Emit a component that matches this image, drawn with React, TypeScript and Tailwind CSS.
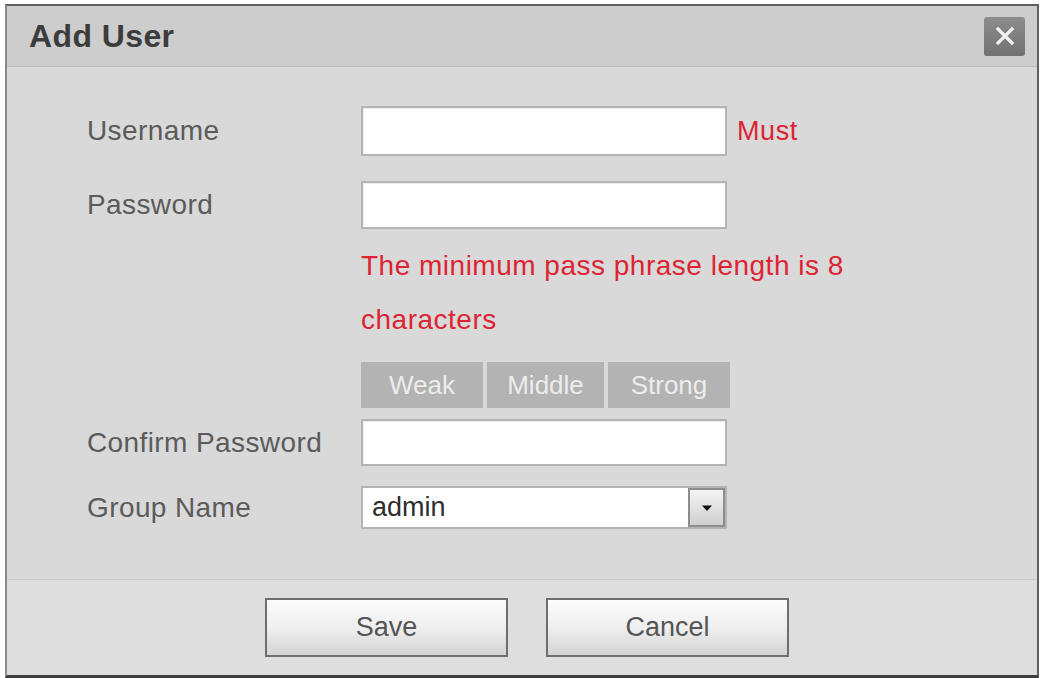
import React from "react";

const font = { fontFamily: '"Liberation Sans", Arial, sans-serif' };

const Field = ({ label, children }: { label: string; children: React.ReactNode }) => (
  <div className="grid grid-cols-[274px_1fr] items-center">
    <span className="text-[28px] text-[#5b5b5b] leading-none tracking-[0.4px]">{label}</span>
    <div className="flex items-center">{children}</div>
  </div>
);

const TextBox = ({ h }: { h: string }) => (
  <div className={`w-[366px] ${h} bg-white border-2 border-[#b4b4b4] shadow-[inset_1px_1px_1px_rgba(0,0,0,0.08)]`} />
);

export default function App() {
  return (
    <div className="w-[1042px] h-[678px] bg-white pt-[4px] pl-[5px] pr-[3px]" style={font}>
      <div className="h-[674px] flex flex-col border-2 border-[#5f5f5f] border-l-[#8a8a8a] border-b-[3px] border-b-[#3f3f3f]">
        <div className="h-[61px] shrink-0 bg-[#cdcdcd] border-b border-[#bcbcbc] flex items-center justify-between pl-[22px] pr-[12px]">
          <h1 className="text-[32px] font-bold text-[#3c3c3c] tracking-[0.4px]">Add User</h1>
          <button className="w-[41px] h-[39px] rounded-[3px] bg-gradient-to-b from-[#8c8c8c] to-[#727272] flex items-center justify-center">
            <svg width="22" height="22" viewBox="0 0 22 22">
              <path d="M4 4L18 18M18 4L4 18" stroke="#f2f2f2" strokeWidth="3.2" strokeLinecap="square" />
            </svg>
          </button>
        </div>

        <div className="flex-1 bg-[#d9d9d9] pt-[39px] pl-[80px]">
          <Field label="Username">
            <TextBox h="h-[50px]" />
            <span className="ml-[10px] text-[27px] text-[#de2433] leading-none tracking-[0.6px]">Must</span>
          </Field>
          <div className="mt-[25px]">
            <Field label="Password">
              <TextBox h="h-[48px]" />
            </Field>
          </div>
          <div className="pl-[274px]">
            <p className="mt-[10px] text-[28px] leading-[54px] text-[#de2433] w-[560px] tracking-[0.5px]">
              The minimum pass phrase length is 8
              <br />
              characters
            </p>
            <div className="mt-[15px] flex gap-[4px] h-[46px] w-[369px] text-[26px] text-[#ececec]">
              <div className="w-[122px] bg-[#b3b3b3] flex items-center justify-center">Weak</div>
              <div className="w-[117px] bg-[#b3b3b3] flex items-center justify-center">Middle</div>
              <div className="flex-1 bg-[#b3b3b3] flex items-center justify-center">Strong</div>
            </div>
          </div>
          <div className="mt-[11px]">
            <Field label="Confirm Password">
              <TextBox h="h-[47px]" />
            </Field>
          </div>
          <div className="mt-[20px]">
            <Field label="Group Name">
              <div className="w-[366px] h-[43px] bg-white border-2 border-[#b4b4b4] flex items-center">
                <span className="flex-1 pl-[9px] text-[27px] text-[#2e2e2e] leading-none">admin</span>
                <div className="w-[37px] h-full bg-gradient-to-b from-[#f4f4f4] to-[#cfcfcf] border-2 border-[#8c8c8c] flex items-center justify-center">
                  <svg width="12" height="8" viewBox="0 0 12 8">
                    <path d="M1 1.5H11L6 7Z" fill="#111" />
                  </svg>
                </div>
              </div>
            </Field>
          </div>
        </div>

        <div className="h-[96px] shrink-0 bg-[#dedede] border-t border-[#cbcbcb] flex items-center justify-center gap-[38px] pl-[10px]">
          <button className="w-[243px] h-[59px] border-2 border-[#6e6e6e] bg-gradient-to-b from-[#fbfbfb] via-[#efefef] to-[#d4d4d4] text-[27px] text-[#555]">
            Save
          </button>
          <button className="w-[243px] h-[59px] border-2 border-[#6e6e6e] bg-gradient-to-b from-[#fbfbfb] via-[#efefef] to-[#d4d4d4] text-[27px] text-[#555]">
            Cancel
          </button>
        </div>
      </div>
    </div>
  );
}
